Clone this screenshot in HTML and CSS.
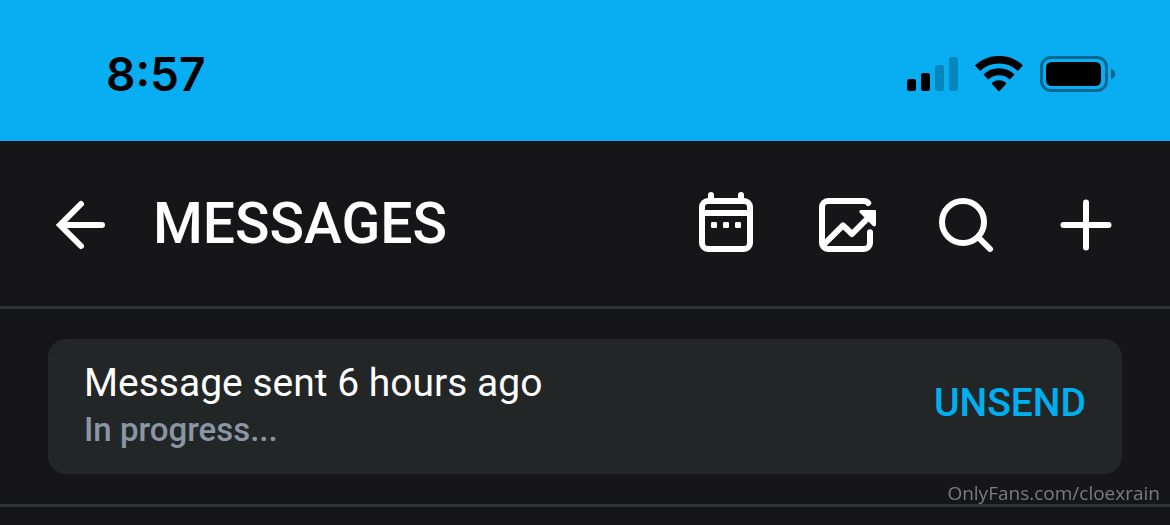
FILE: index.html
```html
<!DOCTYPE html>
<html lang="en">
<head>
  <meta charset="UTF-8">
  <meta name="viewport" content="width=device-width, initial-scale=1">
  <title>Messages</title>
  <link rel="stylesheet" href="styles.css">
</head>
<body>
<div class="status-bar">
  <span class="time">8:57</span>
  <div class="status-icons">
    <svg width="51" height="36" viewBox="0 0 51 36" aria-hidden="true">
      <rect x="0" y="23" width="9" height="12" rx="2.5"/>
      <rect x="14" y="17" width="9" height="18" rx="2.5"/>
      <g opacity=".22">
        <rect x="28" y="9" width="9" height="26" rx="2.5"/>
        <rect x="42" y="1" width="9" height="34" rx="2.5"/>
      </g>
    </svg>
    <svg width="48" height="36" viewBox="0 0 48 36" aria-hidden="true">
      <g fill="none" stroke="#000">
        <path stroke-width="7.6" d="M2.600 12.200a31.300 31.300 0 0 1 42.800 0"/>
        <path stroke-width="7" d="M10.800 21a19.300 19.300 0 0 1 26.400 0"/>
      </g>
      <path d="M17.200 28.200q-.8-.8.1-1.600a10.400 10.400 0 0 1 13.400 0q.9.800.1 1.600l-6 6.600q-.8.800-1.600 0z"/>
    </svg>
    <svg width="75" height="36" viewBox="0 0 75 36" aria-hidden="true">
      <rect x="1.5" y="1.5" width="65" height="33" rx="9.5" fill="none" stroke="#000" stroke-width="3" opacity=".4"/>
      <rect x="6" y="6" width="55" height="24" rx="5.5"/>
      <path d="M71 12.500q4 1.600 4 5.500t-4 5.500z" opacity=".45"/>
    </svg>
  </div>
</div>

<header class="page-header">
  <button class="icon-button" aria-label="Back">
    <svg viewBox="0 0 24 24"><path d="M18 12H4.500M11 5 4 12l7 7" stroke-linejoin="miter"/></svg>
  </button>
  <h1>MESSAGES</h1>
  <div class="actions">
    <button class="icon-button" aria-label="Calendar">
      <svg viewBox="0 0 24 24">
        <rect x="4" y="4" width="16" height="16" rx="2"/>
        <path d="M4 8h16M7 4V2M17 4V2"/>
        <g fill="currentColor" stroke="none">
          <rect x="7" y="11" width="2" height="2" rx=".4"/>
          <rect x="11" y="11" width="2" height="2" rx=".4"/>
          <rect x="15" y="11" width="2" height="2" rx=".4"/>
        </g>
      </svg>
    </button>
    <button class="icon-button" aria-label="Statistics">
      <svg viewBox="0 0 24 24">
        <path d="M19.400 4.700Q18.900 4 18 4H6a2 2 0 0 0-2 2v12a2 2 0 0 0 2 2h12a2 2 0 0 0 2-2v-3.600"/>
        <path d="M4.600 18.500 11 12.100l3 2.900 5.500-5.500"/>
        <path d="M17 7.300h4.700V12q-.2.300-.5.100l-4.400-4.400q-.2-.3.200-.4z" fill="currentColor" stroke-width=".6"/>
      </svg>
    </button>
    <button class="icon-button" aria-label="Search">
      <svg viewBox="0 0 24 24"><circle cx="11" cy="11" r="7"/><path d="m16 16 4 4"/></svg>
    </button>
    <button class="icon-button" aria-label="New message">
      <svg viewBox="0 0 24 24"><path d="M12 4.500v15M4.500 12h15"/></svg>
    </button>
  </div>
</header>

<main>
  <section class="queue">
    <div class="card">
      <div class="card-text">
        <p class="sent">Message sent 6 hours ago</p>
        <p class="progress">In progress...</p>
      </div>
      <button class="unsend">UNSEND</button>
    </div>
  </section>
</main>
<span class="watermark">OnlyFans.com/cloexrain</span>
</body>
</html>
```
FILE: styles.css
```css
* { box-sizing: border-box; }
body { margin: 0; min-height: 100vh; background: #161618; color: #fefefe; font-family: Roboto, Arial, sans-serif; }
h1, p { margin: 0; }
button { padding: 0; border: 0; background: none; font: inherit; cursor: pointer; }

.status-bar { display: flex; align-items: center; justify-content: space-between; padding: 42px 55px 35px 106px; background: #09aef2; color: #000; }
.time { font: 600 46px/64px Inter, sans-serif; }
.status-icons { display: flex; align-items: center; gap: 17px; }

.page-header { display: flex; align-items: center; padding: 48px 48px 45px; border-bottom: 3px solid #303338; }
.page-header h1 { margin-left: 33px; padding-bottom: 2px; font-size: 57px; line-height: 68px; font-weight: 500; }
.actions { display: flex; gap: 48px; margin-left: auto; }
.icon-button { width: 72px; height: 72px; color: #fefefe; }
.icon-button svg { display: block; width: 100%; height: 100%; fill: none; stroke: currentColor; stroke-width: 2; stroke-linecap: round; stroke-linejoin: round; }

.queue { padding: 30px 48px; border-bottom: 3px solid #303338; }
.card { display: flex; align-items: center; justify-content: space-between; padding: 20px 36px 22px; border-radius: 18px; background: #232627; }
.sent { font-size: 39px; line-height: 48px; }
.progress { color: #8a96a3; font-size: 33px; line-height: 45px; font-weight: 500; }
.unsend { padding-bottom: 6px; color: #00aff0; font-size: 39px; line-height: 48px; font-weight: 500; }

.watermark { position: fixed; right: 10px; bottom: 19px; color: #7c7c7d; font: 19px/26px "Open Sans", sans-serif; }
```
